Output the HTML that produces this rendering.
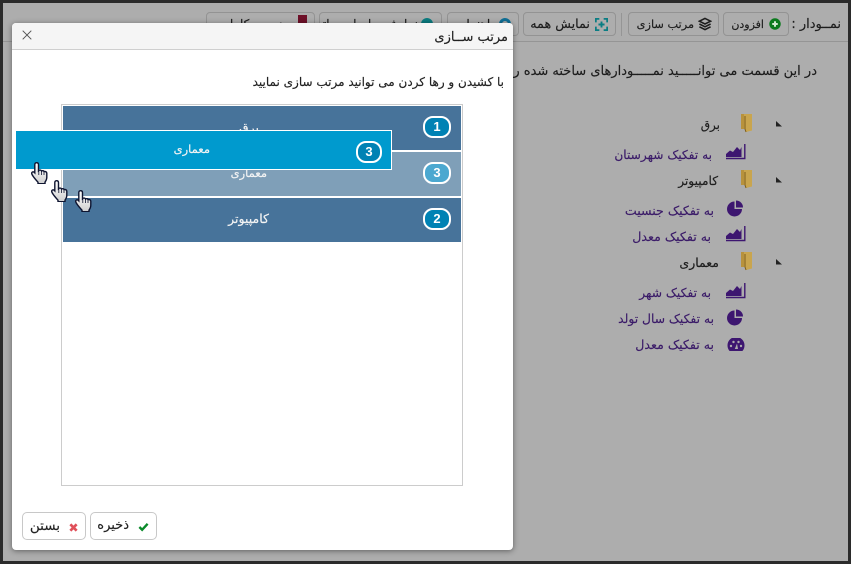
<!DOCTYPE html>
<html lang="fa"><head><meta charset="utf-8"><title>مرتب سازی</title>
<style>
*{box-sizing:border-box}
html,body{margin:0;padding:0;width:851px;height:564px;overflow:hidden;background:#2b2b2b}
body{font-family:"DejaVu Sans","Liberation Sans",sans-serif;position:relative}
.a{position:absolute}
.t{position:absolute;direction:rtl;white-space:nowrap;text-align:right;line-height:18px;-webkit-text-stroke:.15px currentColor}
#page{position:absolute;left:3px;top:3px;width:845px;height:558px;background:#adadad;overflow:hidden}
.tb{position:absolute;top:12px;height:24px;border:1px solid #939393;border-radius:4px;background:#adadad}
.d{color:#1c1c1c;font-size:12px}
.lnk{color:#3a1a68;font-size:12.6px}
#modal{position:absolute;left:12px;top:23px;width:501px;height:527px;background:#fff;border-radius:4px;box-shadow:0 1px 6px rgba(0,0,0,.45)}
.row{position:absolute;left:63px;width:398px;height:44px;background:#47739a}
.badge{position:absolute;width:28px;height:22px;border:2px solid #fff;border-radius:10px;background:#0082b4;color:#fff;font:bold 13px/18px "Liberation Sans",sans-serif;text-align:center}
.w{color:#f4f4f4;font-size:12.5px}
.btn{position:absolute;top:512px;height:28px;border:1px solid #c8c8c8;border-radius:5px;background:#fff}
</style></head>
<body>
<div id="page"></div>

<div class="a" style="left:3px;top:41px;width:845px;height:1px;background:#959595"></div>

<!-- toolbar -->
<div class="tb" style="left:206px;width:109px"></div>
<div class="t d" style="right:560px;top:15px;font-size:12px">مدیریت کامل</div>
<div class="a" style="left:298px;top:15px;width:9px;height:9px;background:#6e1028"></div>
<div class="tb" style="left:319px;width:123px"></div>
<div class="t d" style="right:433px;top:15px;font-size:12px">نمایش سلسله مراتب</div>
<div class="a" style="left:421px;top:18px;width:12px;height:12px;border-radius:50%;background:#0c7c80"></div>
<div class="tb" style="left:447px;width:72px"></div>
<div class="t d" style="right:355px;top:15px;font-size:12px">راهنما</div>
<div class="a" style="left:499px;top:18px;width:12px;height:12px;border-radius:50%;border:3px solid #0f6f96"></div>
<div class="tb" style="left:523px;width:93px"></div>
<div class="t d" style="right:261px;top:16px;font-size:12.8px">نمایش همه</div>
<svg class="a" style="left:595px;top:18px" width="13" height="13" viewBox="0 0 15 15" fill="none" stroke="#0a7d83" stroke-width="2"><path d="M1 5V1h4M10 1h4v4M14 10v4h-4M5 14H1v-4"/><path d="M7.5 4v7M4 7.500h7" stroke-width="2.200"/></svg>
<div class="a" style="left:621px;top:13px;width:1px;height:23px;background:#959595"></div>
<div class="tb" style="left:628px;width:91px"></div>
<div class="t d" style="right:157px;top:16px;font-size:11.300px">مرتب سازی</div>
<svg class="a" style="left:698px;top:17px" width="14" height="14" viewBox="0 0 15 15" fill="none" stroke="#1e1e1e" stroke-width="1.700"><path d="M7.500 1.500 13.500 4.500 7.500 7.500 1.500 4.500Z"/><path d="M1.500 7.500 7.500 10.500 13.500 7.500M1.500 10.500 7.500 13.500 13.500 10.500"/></svg>
<div class="tb" style="left:723px;width:66px"></div>
<div class="t d" style="right:87px;top:16px;font-size:11px">افزودن</div>
<svg class="a" style="left:769px;top:18px" width="12" height="12" viewBox="0 0 13 13"><circle cx="6.500" cy="6.500" r="6.200" fill="#0a7a1c"/><path d="M6.500 3.500v6M3.500 6.500h6" stroke="#cfe8cf" stroke-width="2.200"/></svg>
<div class="t d" style="right:10px;top:16px;font-size:13px">نمــودار :</div>

<!-- page intro text -->
<div class="t d" style="right:34px;top:63px;font-size:13px">در این قسمت می توانـــــید نمـــــودارهای ساخته شده ر</div>

<!-- tree -->
<svg width="0" height="0" style="position:absolute"><defs>
<g id="fold"><path d="M1 1h11v16.500l-6 1.500-1-3H1z" fill="#c9a54e"/><path d="M1 1h3v15H1z" fill="#b8923c"/><path d="M5 3v13l1 3" fill="none" stroke="#7d5d1c" stroke-width="1"/></g>
<g id="area"><path d="M0 13V10L4 6.500l3 1.500 4-5 3 3 1.500-3V13z" fill="#3d1670"/><path d="M0 14.500h19.500M18.800 0v15" fill="none" stroke="#3d1670" stroke-width="1.400"/></g>
<g id="pie"><path d="M7.500 1.500v7.500h7.500A7.500 7.500 0 1 1 7.500 1.500z" fill="#3d1670"/><path d="M9 .5a7 7 0 0 1 7 7H9z" fill="#3d1670"/></g>
<g id="gauge"><path d="M2.600 13a8.500 8.500 0 1 1 12.800 0z" fill="#3d1670"/><g fill="#adadad"><circle cx="4" cy="8" r="1.200"/><circle cx="6.500" cy="4" r="1.200"/><circle cx="11.500" cy="4" r="1.200"/><circle cx="14" cy="8" r="1.200"/><path d="M7.800 11 10 5.500l1 5.500z"/></g></g>
<path id="tri" d="M0 0 6 5.500H0z" fill="#222"/>
<linearGradient id="h" x1="0" y1="0" x2="0" y2="1"><stop offset="0" stop-color="#fff"/><stop offset="1" stop-color="#cfcfcf"/></linearGradient>
<g id="hand"><path d="M5.500.7c1.300 0 2 .8 2 2v6c1-1 2.500-.8 3 .3 1-.7 2.300-.3 2.600.7.900-.5 2.700 0 2.700 1.500v4c0 2-.8 3.500-1.800 5v1.500H7v-1.500C5 18 1 13.500.7 11.500c-.2-1.500 1.300-2.200 2.500-1.200l.6.600V2.700c0-1.200.6-2 1.700-2z" fill="url(#h)" stroke="#0e1430" stroke-width="1.400"/><path d="M7.800 9v4M10.500 9.500v3.500M13 10v3" stroke="#0e1430" stroke-width=".8"/></g>
</defs></svg>

<svg class="a" style="left:776px;top:121px" width="7" height="6"><use href="#tri"/></svg>
<svg class="a" style="left:740px;top:113px" width="13" height="20" viewBox="0 0 13 20"><use href="#fold"/></svg>
<div class="t d" style="right:131px;top:116px">برق</div>
<svg class="a" style="left:726px;top:144px" width="20" height="16" viewBox="0 0 20 16"><use href="#area"/></svg>
<div class="t lnk" style="right:139px;top:146px;font-size:12.200px">به تفکیک شهرستان</div>

<svg class="a" style="left:776px;top:177px" width="7" height="6"><use href="#tri"/></svg>
<svg class="a" style="left:740px;top:169px" width="13" height="20" viewBox="0 0 13 20"><use href="#fold"/></svg>
<div class="t d" style="right:133px;top:172px;font-size:12.200px">کامپیوتر</div>
<svg class="a" style="left:727px;top:200px" width="17" height="17" viewBox="0 0 17 17"><use href="#pie"/></svg>
<div class="t lnk" style="right:137px;top:202px">به تفکیک جنسیت</div>
<svg class="a" style="left:726px;top:226px" width="20" height="16" viewBox="0 0 20 16"><use href="#area"/></svg>
<div class="t lnk" style="right:140px;top:228px">به تفکیک معدل</div>

<svg class="a" style="left:776px;top:259px" width="7" height="6"><use href="#tri"/></svg>
<svg class="a" style="left:740px;top:251px" width="13" height="20" viewBox="0 0 13 20"><use href="#fold"/></svg>
<div class="t d" style="right:132px;top:254px;font-size:12.500px">معماری</div>
<svg class="a" style="left:726px;top:283px" width="20" height="16" viewBox="0 0 20 16"><use href="#area"/></svg>
<div class="t lnk" style="right:140px;top:284px;font-size:12.300px">به تفکیک شهر</div>
<svg class="a" style="left:727px;top:309px" width="17" height="17" viewBox="0 0 17 17"><use href="#pie"/></svg>
<div class="t lnk" style="right:137px;top:310px;font-size:12.300px">به تفکیک سال تولد</div>
<svg class="a" style="left:727px;top:338px" width="18" height="14" viewBox="0 0 18 14"><use href="#gauge"/></svg>
<div class="t lnk" style="right:137px;top:336px">به تفکیک معدل</div>

<!-- modal -->
<div id="modal"></div>
<div class="a" style="left:12px;top:23px;width:501px;height:27px;background:#f5f5f5;border-bottom:1px solid #cfcfcf;border-radius:4px 4px 0 0"></div>
<svg class="a" style="left:22px;top:30px" width="10" height="10" viewBox="0 0 10 10"><path d="M.7.7l8.600 8.600M9.300.7.700 9.300" stroke="#555" stroke-width="1"/></svg>
<div class="t" style="right:343px;top:29px;font-size:13px;color:#222">مرتب ســازی</div>
<div class="t" style="right:347px;top:73px;font-size:12px;color:#222">با کشیدن و رها کردن می توانید مرتب سازی نمایید</div>

<div class="a" style="left:61px;top:104px;width:402px;height:382px;border:1px solid #ccc;background:#fff"></div>
<div class="row" style="top:106px"></div>
<div class="t w" style="right:592px;top:119px">برق</div>
<div class="badge" style="left:423px;top:116px">1</div>
<div class="row" style="top:152px;background:#7f9fb8"></div>
<div class="t w" style="right:584px;top:164px;font-size:11.500px">معماری</div>
<div class="badge" style="left:423px;top:162px;background:#4ba8d0">3</div>
<div class="row" style="top:198px"></div>
<div class="t w" style="right:582px;top:210px">کامپیوتر</div>
<div class="badge" style="left:423px;top:208px">2</div>

<div class="a" style="left:16px;top:130px;width:376px;height:40px;background:#009ace;border:1px solid #fff;border-left:0"></div>
<div class="t w" style="right:641px;top:140px;font-size:11.500px">معماری</div>
<div class="badge" style="left:356px;top:141px;width:26px">3</div>

<svg class="a" style="left:31px;top:162px" width="17" height="22" viewBox="0 0 17 22"><use href="#hand"/></svg>
<svg class="a" style="left:51px;top:180px" width="17" height="22" viewBox="0 0 17 22"><use href="#hand"/></svg>
<svg class="a" style="left:75px;top:190px" width="17" height="22" viewBox="0 0 17 22"><use href="#hand"/></svg>

<!-- buttons -->
<div class="btn" style="left:90px;width:67px"></div>
<div class="t" style="right:722px;top:517px;font-size:13px;color:#222">ذخیره</div>
<svg class="a" style="left:138px;top:522px" width="11" height="10" viewBox="0 0 12 10"><path d="M1.500 5 4.500 8 10.500 1.500" fill="none" stroke="#0a8a2a" stroke-width="2.600"/></svg>
<div class="btn" style="left:22px;width:64px"></div>
<div class="t" style="right:791px;top:517px;font-size:13.500px;color:#222">بستن</div>
<svg class="a" style="left:69px;top:523px" width="9" height="9" viewBox="0 0 10 10"><path d="M1.500 1.500l7 7M8.500 1.500l-7 7" stroke="#e0505a" stroke-width="3"/></svg>
</body></html>
